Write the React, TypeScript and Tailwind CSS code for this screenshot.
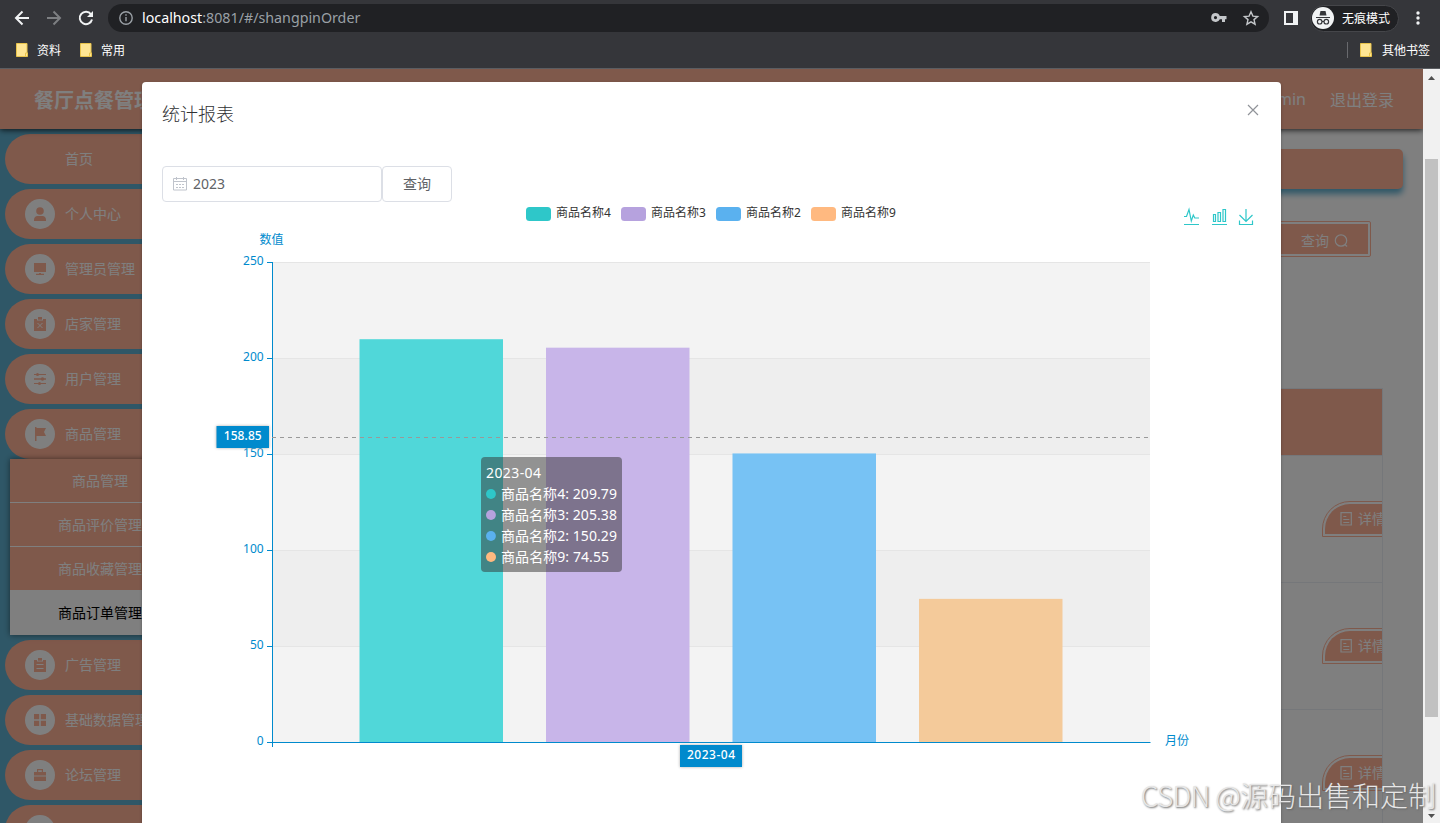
import React from "react";

type IconName =
  | "user"
  | "platform"
  | "release"
  | "operation"
  | "flag"
  | "order"
  | "menu"
  | "case";

const shapes: Record<IconName, React.ReactNode> = {
  user: (
    <>
      <circle cx="7" cy="4" r="3.8" />
      <path d="M1 14v-1.2C1 10.500 2.500 9 4.500 9h5c2 0 3.500 1.500 3.500 3.800V14z" />
    </>
  ),
  platform: <path d="M1 1h12v9H1zM6 11h2v.8h3V13H3v-1.200h3z" />,
  release: (
    <>
      <path d="M1 2h3v1.500h6V2h3v12H1z" />
      <path d="M5 0h4v2.700H5z" />
      <path d="M4.500 6l5 5m0-5l-5 5" className="stroke-white" strokeWidth="1" />
    </>
  ),
  operation: (
    <>
      <path d="M1 2h12v1H1zM1 6.200h12v1.600H1zM1 11h12v1H1z" />
      <circle cx="4.500" cy="2.500" r="1.500" />
      <circle cx="9.500" cy="7" r="1.800" />
      <circle cx="6.500" cy="11.500" r="1.500" />
    </>
  ),
  flag: <path d="M2 0h1.500v1H13l-2 4 2 4H3.500v5H2z" />,
  order: (
    <>
      <path d="M1 2h3v1.500h6V2h3v12H1z" />
      <path d="M5 0h4v2.700H5z" />
      <path d="M3.500 6.500h7m-7 4h7" className="stroke-white" strokeWidth="1" />
    </>
  ),
  menu: <path d="M1 1h5.200v5.200H1zM7.800 1H13v5.200H7.800zM1 7.800h5.200V13H1zM7.800 7.800H13V13H7.800z" />,
  case: (
    <path
      fillRule="evenodd"
      d="M4 1h6v3h3v3.500H1V4h3zM5.200 2.200V4h3.600V2.200zM1 8.500h12V13H1z"
    />
  ),
};

const topItems: { label: string; icon?: IconName }[] = [
  { label: "首页" },
  { label: "个人中心", icon: "user" },
  { label: "管理员管理", icon: "platform" },
  { label: "店家管理", icon: "release" },
  { label: "用户管理", icon: "operation" },
  { label: "商品管理", icon: "flag" },
];

const bottomItems: { label: string; icon?: IconName }[] = [
  { label: "广告管理", icon: "order" },
  { label: "基础数据管理", icon: "menu" },
  { label: "论坛管理", icon: "case" },
];

const subItems = ["商品管理", "商品评价管理", "商品收藏管理"];

function MenuItem({ label, icon }: { label: string; icon?: IconName }) {
  return (
    <div className="flex h-[50px] shrink-0 items-center gap-2.5 rounded-l-[25px] bg-[#ffb297] pl-5 text-sm text-white">
      <span
        className={
          icon
            ? "flex size-[30px] items-center justify-center rounded-full bg-white"
            : "size-[30px]"
        }
      >
        {icon && (
          <svg viewBox="0 0 14 14" className="size-3.5 fill-[#ffb297]">
            {shapes[icon]}
          </svg>
        )}
      </span>
      <span className="whitespace-nowrap">{label}</span>
    </div>
  );
}

function Folder() {
  return (
    <svg viewBox="0 0 12 14" className="h-3.5 w-3">
      <path d="M.5.500h10.500v9.500h.500v3.500H.500z" fill="#ffe694" stroke="#e9c44c" />
      <path d="M9.500 13v-3h2" fill="none" stroke="#e9c44c" />
    </svg>
  );
}

function BrowserBar() {
  return (
    <div className="flex h-[69px] shrink-0 flex-col border-b border-[#5b5d61] bg-[#35363a] text-white">
      <div className="flex h-9 items-center">
        <svg viewBox="0 0 108 36" className="h-9 w-[108px]" fill="none" strokeWidth="2">
          <path d="M29 18H16.500M22.500 11.500L16 18l6.500 6.500" stroke="#f1f3f4" />
          <path d="M47 18h12.500M53.500 11.500L60 18l-6.500 6.500" stroke="#7d7f82" />
          <path d="M91 14.300a6.200 6.200 0 1 0 1 5.200" stroke="#f1f3f4" />
          <path d="M93 11v6h-6z" fill="#f1f3f4" />
        </svg>
        <div className="flex h-7 w-[1161px] items-center rounded-full bg-[#202124]">
          <svg viewBox="0 0 14 14" className="ml-[11px] size-3.5" fill="none" stroke="#9aa0a6" strokeWidth="1.4">
            <circle cx="7" cy="7" r="6.200" />
            <path d="M7 6v4.300M7 3.300v1.500" />
          </svg>
          <span className="ml-[9px] flex-1 text-[14.250px] leading-5 text-[#9aa0a6]">
            <span className="text-white">localhost</span>:8081/#/shangpinOrder
          </span>
          <svg viewBox="0 0 60 28" className="h-7 w-[60px]">
            <path
              fillRule="evenodd"
              d="M7 9a4.500 4.500 0 0 1 4.300 3H18v3.300h-1.500V18h-3v-2.700h-2.200A4.500 4.500 0 1 1 7 9zm0 3a1.600 1.600 0 1 0 0 3.200A1.600 1.600 0 0 0 7 12z"
              transform="translate(-.5 0)"
              fill="#c4c7ca"
            />
            <path
              d="M42 7.800l1.900 4.300 4.700.4-3.600 3.100 1.100 4.600-4.100-2.400-4.100 2.400 1.100-4.600-3.600-3.100 4.700-.4z"
              fill="none"
              stroke="#c4c7ca"
              strokeWidth="1.400"
            />
          </svg>
        </div>
        <svg viewBox="0 0 14 14" className="ml-[15px] size-3.5">
          <path fillRule="evenodd" d="M0 0h14v14H0zM2 2v10h7V2z" fill="#f1f3f4" />
        </svg>
        <div className="ml-3 flex h-[27px] w-[89px] items-center gap-[7px] rounded-full border border-[#45464a] bg-[#202124] pl-px">
          <svg viewBox="0 0 22 22" className="size-[22px]">
            <circle cx="11" cy="11" r="11" fill="#f1f3f4" />
            <path d="M7.500 8.500L8.500 4h5l1 4.500z" fill="#35363a" />
            <path d="M4 10.500h14" stroke="#35363a" strokeWidth="1" />
            <g fill="none" stroke="#35363a" strokeWidth="1.200">
              <circle cx="7.700" cy="14.700" r="2.300" />
              <circle cx="14.300" cy="14.700" r="2.300" />
              <path d="M10 14.500h2" />
            </g>
          </svg>
          <span className="whitespace-nowrap pl-px pt-0.5 text-xs">无痕模式</span>
        </div>
        <svg viewBox="0 0 4 14" className="ml-[17px] h-3.5 w-1" fill="#f1f3f4">
          <circle cx="2" cy="2" r="1.700" />
          <circle cx="2" cy="7" r="1.700" />
          <circle cx="2" cy="12" r="1.700" />
        </svg>
      </div>
      <div className="flex h-7 items-center pl-4 pr-2.5 text-xs">
        <Folder />
        <span className="ml-[9px] pt-0.5">资料</span>
        <span className="ml-[19px] flex">
          <Folder />
        </span>
        <span className="ml-[9px] pt-0.5">常用</span>
        <span className="ml-auto mr-3 h-4 w-px bg-[#696a6e]" />
        <Folder />
        <span className="ml-[10px] pt-0.5">其他书签</span>
      </div>
    </div>
  );
}

function DetailButton() {
  return (
    <div className="h-9 w-[76px] shrink-0 rounded-tl-[28px] border border-[#ffb297] p-0.5">
      <div className="flex h-full items-center gap-1.5 rounded-tl-[25px] bg-[#ffb297] pl-[15px] text-sm text-white">
        <svg viewBox="0 0 12 14" className="h-3.5 w-3 shrink-0" fill="none" stroke="white" strokeWidth="1.200">
          <path d="M1 .700h10.300v12.300H1zM3.300 4.500h3M3.300 7.500h6M3.300 10.500h6" />
        </svg>
        <span className="whitespace-nowrap">详情</span>
      </div>
    </div>
  );
}

function Page() {
  return (
    <div className="flex h-full flex-col bg-white">
      <div className="z-10 flex h-[60px] shrink-0 items-center bg-[#ffb297] pl-[34px] pr-[29px] text-white shadow-[0_1px_6px_rgba(0,0,0,0.8)]">
        <span className="pt-[3px] text-xl font-bold">餐厅点餐管理系统</span>
        <span className="ml-auto text-base">admin</span>
        <span className="ml-6 pt-px text-base">退出登录</span>
      </div>
      <div className="flex min-h-0 flex-1">
        <div className="flex w-[195px] shrink-0 flex-col gap-[5px] overflow-hidden bg-[#5fafcf] pl-[5px] pt-[5px]">
          {topItems.map((item) => (
            <MenuItem key={item.label} label={item.label} icon={item.icon} />
          ))}
          <div className="z-0 -mt-[5px] ml-[5px] mr-[5px] shrink-0 text-center text-sm text-white shadow-[0_0_6px_rgba(0,0,0,0.5)]">
            {subItems.map((label) => (
              <div key={label} className="h-11 border-b border-white bg-[#ffb297] leading-[44px]">
                {label}
              </div>
            ))}
            <div className="h-11 bg-white leading-[44px] text-black">商品订单管理</div>
          </div>
          {bottomItems.map((item) => (
            <MenuItem key={item.label} label={item.label} icon={item.icon} />
          ))}
          <MenuItem label="" icon="order" />
        </div>
        <div className="flex min-w-0 flex-1 flex-col pl-5 pr-5 pt-5">
          <div className="h-10 shrink-0 rounded-[5px] bg-[#ffb297] shadow-[0_5px_6px_#5fafcf]" />
          <div className="mr-8 mt-8 flex justify-end">
            <div className="h-9 w-[110px] rounded-[2px] border border-[#ffb297] p-0.5">
              <div className="flex h-full items-center justify-end gap-[5px] bg-[#ffb297] pr-5 pt-[3px] text-sm text-white">
                查询
                <svg viewBox="0 0 14 14" className="size-3.5" fill="none" stroke="white" strokeWidth="1.200">
                  <circle cx="7" cy="6.500" r="5.700" />
                  <path d="M11 10.500l2 2" />
                </svg>
              </div>
            </div>
          </div>
          <div className="mr-5 mt-[131px] border-r border-t border-[#ebeef5]">
            <div className="h-[67px] border-b border-[#ebeef5] bg-[#ffb297]" />
            {[0, 1, 2].map((row) => (
              <div
                key={row}
                className="flex h-[127px] items-center justify-end overflow-hidden border-b border-[#ebeef5] pl-4"
              >
                <div className="w-[60px] overflow-hidden">
                  <DetailButton />
                </div>
              </div>
            ))}
          </div>
        </div>
      </div>
    </div>
  );
}

const series = [
  { name: "商品名称4", value: 209.79, color: "#2ec7c9", bar: "#50d7d9", x: 359.5, lx: 526 },
  { name: "商品名称3", value: 205.38, color: "#b6a2de", bar: "#c8b5e9", x: 546, lx: 621 },
  { name: "商品名称2", value: 150.29, color: "#5ab1ef", bar: "#77c2f4", x: 732.5, lx: 716 },
  { name: "商品名称9", value: 74.55, color: "#ffb980", bar: "#f4ca9a", x: 919, lx: 811 },
];

const ticks = [250, 200, 150, 100, 50, 0];

function Chart() {
  return (
    <div className="relative h-[621px] w-[1099px]">
      <svg viewBox="162 202 1099 621" className="h-full w-full text-xs">
        {ticks.slice(0, 5).map((t, i) => (
          <rect key={t} x="272" y={262 + i * 96} width="878" height="96" fill={i % 2 ? "#eeeeee" : "#f3f3f3"} />
        ))}
        {ticks.slice(0, 5).map((t, i) => (
          <path key={t} d={`M272 ${262.5 + i * 96}h878`} stroke="#e5e5e5" />
        ))}
        {series.map((s) => (
          <g key={s.name}>
            <rect x={s.x} y={742 - s.value * 1.92} width="143.5" height={s.value * 1.92} fill={s.bar} />
            <rect x={s.lx} y="207" width="25" height="14" rx="3.5" fill={s.color} />
            <text x={s.lx + 30} y="217" fill="#333">
              {s.name}
            </text>
          </g>
        ))}
        <path d="M272.500 262v485M272 742.500h878.500" stroke="#008acd" />
        {ticks.map((t, i) => (
          <g key={t}>
            <path d={`M267 ${262.5 + i * 96}h5`} stroke="#008acd" />
            <text x="263.700" y={265.3 + i * 96} textAnchor="end" fill="#008acd">
              {t}
            </text>
          </g>
        ))}
        <text x="259.500" y="243.700" fill="#008acd">数值</text>
        <text x="1165" y="745" fill="#008acd">月份</text>
        <path d="M272 437.500h878" stroke="#999" strokeDasharray="4 4" />
        <g className="drop-shadow-[0_0_1.500px_#aaa]">
          <rect x="216.500" y="426" width="52.500" height="22" fill="#008acd" />
          <rect x="680" y="745" width="62" height="22" fill="#008acd" />
        </g>
        <g fill="white" textAnchor="middle" className="font-medium">
          <text x="242.700" y="440" textLength="38">158.85</text>
          <text x="711" y="759.300" textLength="48">2023-04</text>
        </g>
        <g fill="none" stroke="#2ec7c9" strokeWidth="1.200">
          <path d="M1184 216.500h2.500l2.500-7 2.300 11.500 2-6 1.500 3h4.200M1184 224.500h15" />
          <path d="M1213.500 214.500h2v7h-2zM1218 212.500h2.500v9h-2.500zM1223 209.500h2.500v12h-2.500zM1212 224.500h15" />
          <path d="M1246 209v12.500M1239.500 215l6.500 6.500 6.500-6.500M1239.500 220.500v4h13v-4" />
        </g>
      </svg>
      <div className="absolute left-[319px] top-[255px] w-[141px] rounded bg-[rgba(50,50,50,0.5)] p-[5px] text-sm leading-[21px] text-white">
        <div className="tracking-[0.4px]">2023-04</div>
        {series.map((s) => (
          <div key={s.name} className="flex items-center whitespace-nowrap tracking-[0.070px]">
            <svg viewBox="0 0 10 10" className="mr-[5px] size-2.5">
              <circle cx="5" cy="5" r="5" fill={s.color} />
            </svg>
            {s.name}: {s.value}
          </div>
        ))}
      </div>
    </div>
  );
}

function Dialog() {
  return (
    <div className="ml-[142px] mt-[13px] flex h-[760px] w-[1139px] flex-col rounded-sm bg-white px-5 pt-5 shadow-[0_1px_3px_rgba(0,0,0,0.3)]">
      <div className="flex h-6 justify-between">
        <span className="text-lg font-light leading-6 text-[#303133]">统计报表</span>
        <svg viewBox="0 0 12 12" className="mr-[2px] mt-[2px] size-3" fill="none" stroke="#909399" strokeWidth="1.200">
          <path d="M1 1l10 10M11 1L1 11" />
        </svg>
      </div>
      <div className="mt-10 flex h-9 shrink-0 text-sm text-[#606266]">
        <div className="flex w-[220px] items-center rounded border border-[#dcdfe6] pl-2.5">
          <svg viewBox="0 0 14 14" className="mr-1.5 size-3.5" fill="none" stroke="#c0c4cc">
            <path d="M.5 1.500h13v11.500H.500zM.5 4.500h13M3.500 0v3M10.500 0v3" />
            <path d="M3 7.500h8M3 10.500h8" strokeDasharray="2 1" />
          </svg>
          2023
        </div>
        <div className="flex w-[70px] items-center justify-center rounded border border-[#dcdfe6]">查询</div>
      </div>
      <Chart />
    </div>
  );
}

function ScrollBar() {
  return (
    <div className="flex w-[17px] shrink-0 flex-col items-center bg-[#f1f1f1]">
      <svg viewBox="0 0 17 17" className="h-[17px] w-[17px]" fill="#505050">
        <path d="M5 11l3.500-4 3.500 4z" />
      </svg>
      <div className="mt-[73px] h-[558px] w-[13px] bg-[#c1c1c1]" />
      <svg viewBox="0 0 17 17" className="mt-auto h-[17px] w-[17px]" fill="#505050">
        <path d="M5 8l3.500 4L12 8z" />
      </svg>
    </div>
  );
}

export default function App() {
  return (
    <div className="relative flex h-[823px] w-[1440px] flex-col overflow-hidden font-['Noto_Sans','Noto_Sans_CJK_SC',sans-serif]">
      <BrowserBar />
      <div className="flex min-h-0 flex-1">
        <div className="relative min-w-0 flex-1 overflow-hidden">
          <Page />
          <div className="absolute inset-0 z-20 overflow-hidden bg-black/50">
            <Dialog />
          </div>
        </div>
        <ScrollBar />
      </div>
      <div className="absolute bottom-2 right-[4px] z-30 whitespace-nowrap font-['Noto_Sans_CJK_SC',sans-serif] text-[28px] font-light leading-10 text-[#e6e6e6] [text-shadow:1px_1px_2px_#666]">
        <span className="tracking-[-0.7px]">CSDN @</span>源码出售和定制
      </div>
    </div>
  );
}
